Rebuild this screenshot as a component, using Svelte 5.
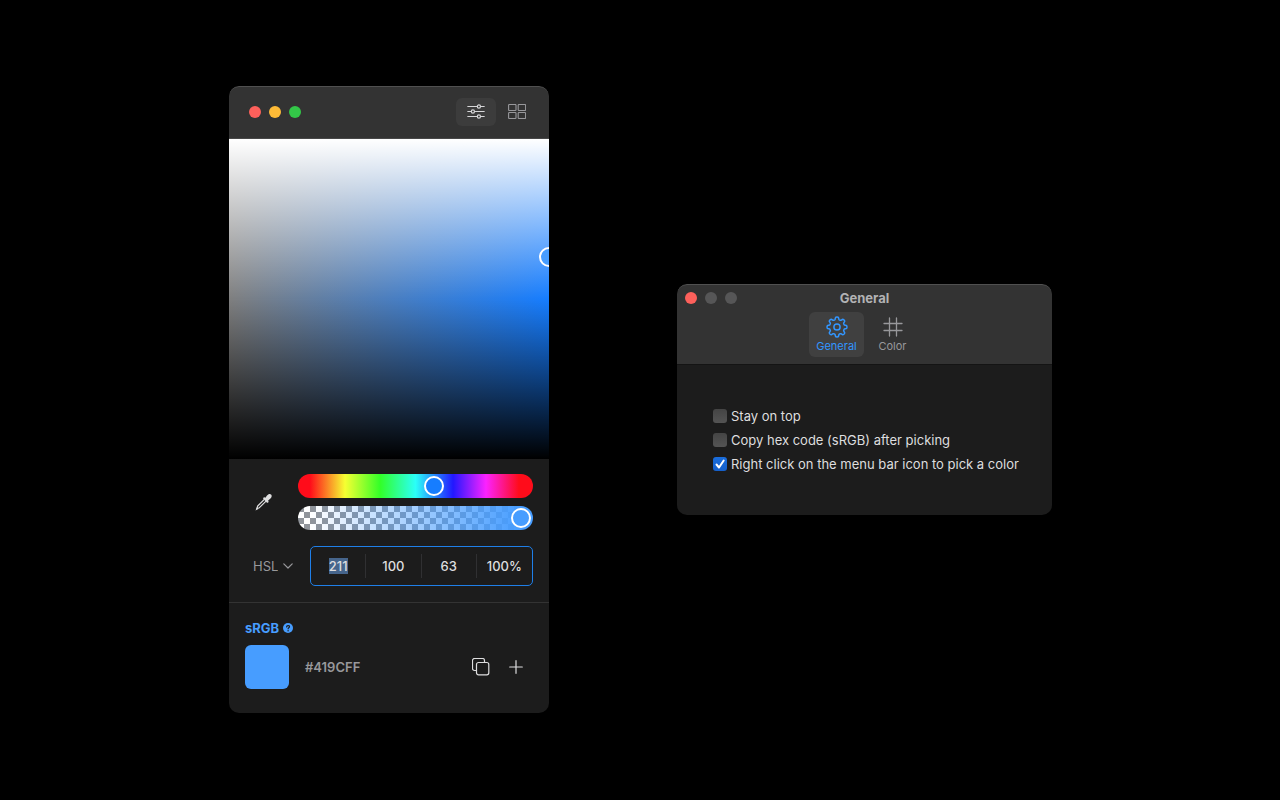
<script>
  import { onMount } from 'svelte';

  let hue = $state(211);
  let alpha = $state(100);
  let model = $state('HSL');
  let tab = $state('General');
  let firstField;

  let fields = $state([
    { label: 'Hue', value: '211' },
    { label: 'Saturation', value: '100' },
    { label: 'Lightness', value: '63' },
    { label: 'Alpha', value: '100%' }
  ]);

  let options = $state([
    { id: 'stay', text: 'Stay on top', checked: false },
    { id: 'copy', text: 'Copy hex code (sRGB) after picking', checked: false },
    { id: 'right', text: 'Right click on the menu bar icon to pick a color', checked: true }
  ]);

  // Outline of an eight-toothed gear with softly rounded teeth.
  const gear = Array.from({ length: 160 }, (_, i) => {
    const angle = (i / 160) * Math.PI * 2;
    const r = 8.7 + 1.25 * Math.tanh(2.2 * Math.cos(8 * angle));
    return `${(11 + r * Math.sin(angle)).toFixed(2)},${(11 - r * Math.cos(angle)).toFixed(2)}`;
  }).join(' ');

  onMount(() => {
    firstField.focus();
    firstField.select();
  });
</script>

<main>
  <section class="window picker" aria-label="Color picker">
    <header class="toolbar">
      <div class="lights">
        <button class="light close" aria-label="Close"></button>
        <button class="light minimize" aria-label="Minimize"></button>
        <button class="light zoom" aria-label="Zoom"></button>
      </div>
      <div class="views">
        <button class="view active" aria-label="Sliders">
          <svg width="18" height="16" viewBox="0 0 18 16" fill="none" stroke="#d6d6d8" stroke-width="1.2" stroke-linecap="round">
            <path d="M.8 2.5h9.4M13.6 2.5h3.6M.8 7.5h3.4M7.6 7.5h9.6M.8 12.5h9.4M13.6 12.5h3.6" />
            <circle cx="11.9" cy="2.5" r="1.6" />
            <circle cx="5.9" cy="7.5" r="1.6" />
            <circle cx="11.9" cy="12.5" r="1.6" />
          </svg>
        </button>
        <button class="view" aria-label="Grid">
          <svg width="18" height="16" viewBox="0 0 18 16" fill="none" stroke="#98989b" stroke-width="1.1">
            <rect x=".6" y=".5" width="7.4" height="6" rx=".7" />
            <rect x="10.2" y=".5" width="7.4" height="6" rx=".7" />
            <rect x=".6" y="8.5" width="7.4" height="6" rx=".7" />
            <rect x="10.2" y="8.5" width="7.4" height="6" rx=".7" />
          </svg>
        </button>
      </div>
    </header>

    <div class="plane"><span class="handle"></span></div>

    <div class="controls">
      <div class="row">
        <button class="dropper" aria-label="Pick a color from the screen">
          <svg width="20" height="20" viewBox="0 0 20 20">
            <path d="M10.6 7.1 3.7 14 2.8 16.6l2.6-.9 6.9-6.9" fill="none" stroke="#dededf" stroke-width="1.2" stroke-linejoin="round" />
            <path d="M1.500 18.600 2.800 15.400l1.600 1.600z" fill="#dededf" />
            <path d="M9.500 5.700c.6-.7 1.300-.4 1.900.1l1.600-2.200c1.200-1.600 3-2.100 4.100-1s.7 2.900-.9 4.200l-2.100 1.700c.5.6.7 1.300.1 1.900-.5.5-1.100.4-1.500 0l-3.200-3.300c-.4-.4-.5-.9 0-1.400z" fill="#dededf" />
          </svg>
        </button>
        <div class="sliders">
          <input class="slider hue" type="range" min="0" max="360" bind:value={hue} aria-label="Hue" />
          <input class="slider alpha" type="range" min="0" max="100" bind:value={alpha} aria-label="Opacity" />
        </div>
      </div>

      <div class="row values">
        <div class="model">
          <select bind:value={model} aria-label="Color model">
            <option>HSL</option>
            <option>RGB</option>
          </select>
          <svg width="10" height="6" viewBox="0 0 10 6" fill="none" stroke="#98989b" stroke-width="1.2" stroke-linecap="round" stroke-linejoin="round">
            <path d="M.8.8 5 5 9.2.8" />
          </svg>
        </div>
        <div class="fields">
          <input type="text" aria-label={fields[0].label} bind:value={fields[0].value} bind:this={firstField} />
          {#each fields.slice(1) as field}
            <input type="text" aria-label={field.label} value={field.value} />
          {/each}
        </div>
      </div>
    </div>

    <div class="result">
      <h2>
        sRGB
        <svg width="10" height="10" viewBox="0 0 10 10">
          <circle cx="5" cy="5" r="5" fill="#479dff" />
          <path d="M3.6 3.9c0-1.8 2.9-1.8 2.9-.1 0 1-1.4 1-1.4 2" fill="none" stroke="#1c1c1c" stroke-width="1.2" stroke-linecap="round" />
          <circle cx="5.1" cy="7.7" r=".7" fill="#1c1c1c" />
        </svg>
      </h2>
      <div class="swatch-row">
        <span class="swatch"></span>
        <span class="hex">#419CFF</span>
        <div class="actions">
          <button class="action" aria-label="Copy">
            <svg width="18" height="18" viewBox="0 0 18 18" fill="none" stroke="#dededf" stroke-width="1.2">
              <path d="M4.5 12.500H2.500A2 2 0 0 1 .5 10.500V2.500a2 2 0 0 1 2-2h8a2 2 0 0 1 2 2v2" />
              <rect x="4.500" y="4.500" width="12.300" height="12.300" rx="2" />
            </svg>
          </button>
          <button class="action" aria-label="Add">
            <svg width="14" height="14" viewBox="0 0 14 14" stroke="#dededf" stroke-width="1.2" stroke-linecap="round">
              <path d="M7 .7v12.6M.7 7h12.6" />
            </svg>
          </button>
        </div>
      </div>
    </div>
  </section>

  <section class="window settings" aria-label="Settings">
    <header class="titlebar">
      <div class="title-row">
        <div class="lights">
          <button class="light close" aria-label="Close"></button>
          <button class="light off" aria-label="Minimize" disabled></button>
          <button class="light off" aria-label="Zoom" disabled></button>
        </div>
        <h1>General</h1>
      </div>
      <nav>
        <button class="tab" class:active={tab === 'General'} onclick={() => (tab = 'General')}>
          <svg width="22" height="22" viewBox="0 0 22 22" fill="none" stroke="currentColor" stroke-width="1.5" stroke-linejoin="round">
            <polygon points={gear} />
            <circle cx="11" cy="11" r="3.1" />
          </svg>
          General
        </button>
        <button class="tab" class:active={tab === 'Color'} onclick={() => (tab = 'Color')}>
          <svg width="22" height="22" viewBox="0 0 22 22" fill="none" stroke="currentColor" stroke-width="1.3" stroke-linecap="round">
            <path d="M7.500 2v18M14.500 2v18M2 7.500h18M2 14.500h18" />
          </svg>
          Color
        </button>
      </nav>
    </header>
    <div class="options">
      {#each options as option}
        <label for={option.id}>
          <input id={option.id} type="checkbox" bind:checked={option.checked} />
          <span>{option.text}</span>
        </label>
      {/each}
    </div>
  </section>
</main>

<style>
  :global(body) {
    margin: 0;
    background: #000;
  }

  main {
    box-sizing: border-box;
    min-height: 100vh;
    padding: 0 0 1px 1px;
    display: flex;
    flex-wrap: wrap;
    align-items: center;
    justify-content: center;
    align-content: center;
    gap: 128px;
    font-family: Inter, 'Liberation Sans', sans-serif;
    font-size: 13px;
    line-height: 16px;
    color: #dededf;
  }

  button,
  input,
  select {
    font: inherit;
    color: inherit;
    margin: 0;
    padding: 0;
    border: 0;
    background: none;
  }

  svg {
    display: block;
    flex: none;
  }

  h1,
  h2 {
    margin: 0;
    font-size: 13px;
  }

  .window {
    background: #1c1c1c;
    border-radius: 10px;
    overflow: hidden;
  }

  .picker {
    width: 320px;
  }

  .toolbar {
    box-sizing: border-box;
    height: 53px;
    padding: 0 12px 2px 20px;
    display: flex;
    align-items: center;
    justify-content: space-between;
    background: #333;
    border-top: 1px solid #505050;
    border-bottom: 1px solid #484848;
    border-radius: 10px 10px 0 0;
  }

  .lights {
    display: flex;
    gap: 8px;
  }

  .light {
    width: 12px;
    height: 12px;
    border-radius: 50%;
  }

  .close {
    background: #fd605b;
  }

  .minimize {
    background: #febb37;
  }

  .zoom {
    background: #33c748;
  }

  .off {
    background: #565657;
  }

  .views {
    display: flex;
    gap: 1px;
  }

  .view {
    width: 40px;
    height: 28px;
    display: grid;
    place-items: center;
    border-radius: 6px;
  }

  .view.active {
    background: #3c3c3c;
  }

  .plane {
    position: relative;
    aspect-ratio: 1;
    background:
      linear-gradient(#fff, rgb(255 255 255 / 0) 50%, rgb(0 0 0 / 0) 50%, #000),
      linear-gradient(to right, #7f7f7f, #167dff);
    overflow: hidden;
  }

  .handle {
    position: absolute;
    left: 100%;
    top: 37%;
    width: 16px;
    height: 16px;
    margin: -10px;
    border: 2px solid #fff;
    border-radius: 50%;
    background: #479dff;
  }

  .controls {
    padding: 15px 16px 16px;
    display: flex;
    flex-direction: column;
    gap: 16px;
    border-bottom: 1px solid #333;
  }

  .row {
    display: flex;
    align-items: center;
    gap: 16px;
  }

  .dropper {
    width: 37px;
    height: 37px;
    display: grid;
    place-items: center;
  }

  .sliders {
    flex: 1;
    display: flex;
    flex-direction: column;
    gap: 8px;
  }

  .slider {
    appearance: none;
    box-sizing: border-box;
    width: 100%;
    height: 24px;
    padding: 0 2px;
    border-radius: 12px;
  }

  .hue {
    background: linear-gradient(
      to right,
      #ff0c1a 12px,
      #f6ff32 20%,
      #32ff28 35%,
      #2bfff8 50%,
      #2218ff 66%,
      #fb22ff 80%,
      #ff0c1a 94%
    );
  }

  .alpha {
    background:
      linear-gradient(to right, rgb(71 157 255 / 0) 12px, #479dff calc(100% - 12px)),
      repeating-conic-gradient(#fff 0 25%, #90949a 0 50%) 0 0 / 12px 12px;
  }

  .slider::-webkit-slider-thumb {
    appearance: none;
    box-sizing: border-box;
    width: 20px;
    height: 20px;
    border: 2px solid #fff;
    border-radius: 50%;
  }

  .hue::-webkit-slider-thumb {
    background: #167dff;
  }

  .alpha::-webkit-slider-thumb {
    background: #479dff;
  }

  .values {
    justify-content: space-between;
  }

  .model {
    padding-left: 8px;
    display: flex;
    align-items: center;
    gap: 5px;
    color: #98989b;
  }

  .model select {
    appearance: none;
    field-sizing: content;
  }

  .fields {
    box-sizing: border-box;
    width: 223px;
    height: 40px;
    padding: 7px 0;
    display: grid;
    grid-template-columns: repeat(4, 1fr);
    border: 1px solid #1f7fe8;
    border-radius: 5px;
  }

  .fields input {
    min-width: 0;
    text-align: center;
    outline: none;
    font-weight: 500;
    border-right: 1px solid #303032;
  }

  .fields input:last-child {
    border-right: 0;
  }

  .fields input::selection {
    background: #46658c;
    color: #dededf;
  }

  .result {
    padding: 17px 16px 24px;
  }

  h2 {
    display: flex;
    align-items: center;
    gap: 4px;
    font-weight: 700;
    color: #479dff;
  }

  .swatch-row {
    margin-top: 9px;
    display: flex;
    align-items: center;
    gap: 16px;
  }

  .swatch {
    width: 44px;
    height: 44px;
    border-radius: 6px;
    background: #479dff;
  }

  .hex {
    flex: 1;
    font-weight: 600;
    color: #98989b;
  }

  .actions {
    display: flex;
    gap: 1px;
  }

  .action {
    width: 34px;
    height: 34px;
    display: grid;
    place-items: center;
  }

  .settings {
    width: 375px;
  }

  .titlebar {
    background: #333;
    border-top: 1px solid #505050;
    border-bottom: 1px solid #141414;
    border-radius: 10px 10px 0 0;
  }

  .title-row {
    padding: 5px 8px 6px;
    display: grid;
    grid-template-columns: 1fr auto 1fr;
    align-items: center;
  }

  h1 {
    font-weight: 700;
    color: #b2b2b4;
  }

  nav {
    display: flex;
    justify-content: center;
    gap: 1px;
    padding-bottom: 7px;
  }

  .tab {
    width: 55px;
    height: 45px;
    padding-top: 1px;
    display: flex;
    flex-direction: column;
    align-items: center;
    justify-content: center;
    border-radius: 6px;
    font-size: 11px;
    color: #98989b;
  }

  .tab.active {
    background: #404040;
    color: #3296ff;
  }

  .options {
    padding: 43px 16px 43px 36px;
    display: flex;
    flex-direction: column;
    gap: 8px;
  }

  label {
    display: flex;
    align-items: center;
    gap: 4px;
  }

  label input {
    appearance: none;
    flex: none;
    width: 14px;
    height: 14px;
    border-radius: 3px;
    background: linear-gradient(#444, #545454);
  }

  label input:checked {
    background:
      url("data:image/svg+xml,%3Csvg xmlns='http://www.w3.org/2000/svg' viewBox='0 0 14 14' fill='none' stroke='white' stroke-width='2' stroke-linecap='round' stroke-linejoin='round'%3E%3Cpath d='M3.5 7.5 6 10.5 10.7 3.5'/%3E%3C/svg%3E"),
      linear-gradient(#1a6ddc, #1560cb);
  }
</style>
